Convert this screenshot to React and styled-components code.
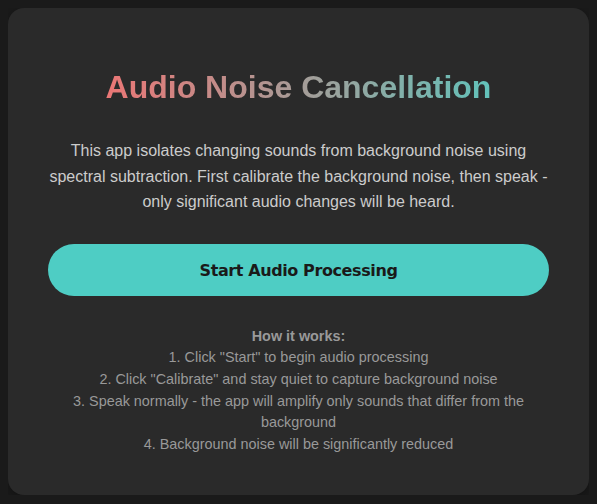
import styled, { createGlobalStyle } from "styled-components"

const GlobalStyle = createGlobalStyle`
body{
  margin:8px;
  background-color:#1a1a1a;
  font-family:"Liberation Sans", Arial, sans-serif;
}
`

const Card = styled.div`
background-color:#2a2a2a;
border-radius:16px;
padding:40px;
text-align:center;
box-shadow:0 4px 12px rgba(0,0,0,0.3);
`

const Title = styled.h1`
margin:21px 0 32px;
font-size:32px;
font-weight:700;
background:linear-gradient(90deg, #ff6b6b, #4ecdc4);
-webkit-background-clip:text;
background-clip:text;
color:transparent;
`

const Intro = styled.p`
margin:0 0 29px;
font-size:16px;
line-height:1.6;
color:#cccccc;
`

const StartButton = styled.button`
display:block;
width:100%;
height:52px;
padding-top:2px;
border:none;
border-radius:26px;
background-color:#4ecdc4;
color:#1a1a1a;
font-family:Tahoma, "DejaVu Sans", sans-serif;
font-size:16px;
font-weight:700;
letter-spacing:-0.4px;
cursor:pointer;
`

const Steps = styled.div`
margin-top:30px;
font-size:14.4px;
line-height:1.5;
color:#999999;
`

const StepsTitle = styled.div`
font-weight:700;
`

const steps = [
  '1. Click "Start" to begin audio processing',
  '2. Click "Calibrate" and stay quiet to capture background noise',
  "3. Speak normally - the app will amplify only sounds that differ from the background",
  "4. Background noise will be significantly reduced",
]

export default function App() {
  return (
    <>
      <GlobalStyle />
      <Card>
        <Title>Audio Noise Cancellation</Title>
        <Intro>
          This app isolates changing sounds from background noise using spectral subtraction. First
          calibrate the background noise, then speak - only significant audio changes will be heard.
        </Intro>
        <StartButton>Start Audio Processing</StartButton>
        <Steps>
          <StepsTitle>How it works:</StepsTitle>
          {steps.map(s => (
            <div key={s}>{s}</div>
          ))}
        </Steps>
      </Card>
    </>
  )
}
